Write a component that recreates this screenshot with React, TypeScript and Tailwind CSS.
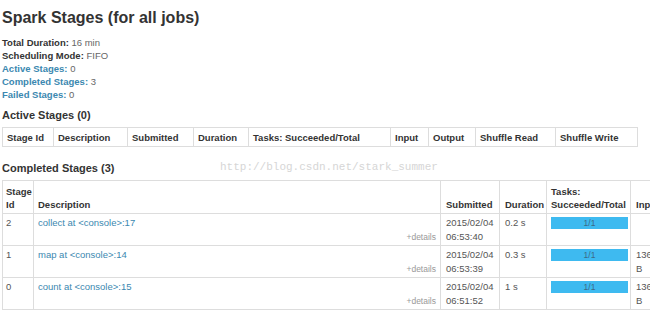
import React from 'react';

const activeCols = [
  { label: 'Stage Id', w: 'w-[51px]' },
  { label: 'Description', w: 'w-[74px]' },
  { label: 'Submitted', w: 'w-[66px]' },
  { label: 'Duration', w: 'w-[55px]' },
  { label: 'Tasks: Succeeded/Total', w: 'w-[142px]' },
  { label: 'Input', w: 'w-[38px]' },
  { label: 'Output', w: 'w-[47px]' },
  { label: 'Shuffle Read', w: 'w-[80px]' },
  { label: 'Shuffle Write', w: 'w-[82px]' },
];

const stages = [
  { id: '2', desc: 'collect at <console>:17', date: '2015/02/04', time: '06:53:40', dur: '0.2 s', input: '' },
  { id: '1', desc: 'map at <console>:14', date: '2015/02/04', time: '06:53:39', dur: '0.3 s', input: '136 B' },
  { id: '0', desc: 'count at <console>:15', date: '2015/02/04', time: '06:51:52', dur: '1 s', input: '136 B' },
];

export default function App() {
  return (
    <div className="relative w-[650px] h-[323px] overflow-hidden bg-white text-[#333] font-['Liberation_Sans',Arial,sans-serif]">
      <h3 className="pl-[2px] pt-[6px] text-[16px] leading-[24px] font-bold text-[#333]">
        Spark Stages (for all jobs)
      </h3>

      <ul className="mt-[6px] pl-[2px] text-[9.5px] leading-[13px]">
        <li>
          <strong>Total Duration:</strong> <span className="text-[#666]">16 min</span>
        </li>
        <li>
          <strong>Scheduling Mode:</strong> <span className="text-[#666]">FIFO</span>
        </li>
        <li>
          <strong className="text-[#3b88b0]">Active Stages:</strong> <span className="text-[#666]">0</span>
        </li>
        <li>
          <strong className="text-[#3b88b0]">Completed Stages:</strong> <span className="text-[#666]">3</span>
        </li>
        <li>
          <strong className="text-[#3b88b0]">Failed Stages:</strong> <span className="text-[#666]">0</span>
        </li>
      </ul>

      <h4 className="mt-[7px] pl-[2px] text-[11px] leading-[14px] font-bold">Active Stages (0)</h4>
      <table className="mt-[5px] ml-[2px] table-fixed border-collapse text-[9.5px]">
        <thead>
          <tr>
            {activeCols.map(c => (
              <th
                key={c.label}
                className={`${c.w} border border-[#ddd] px-[4px] py-0 h-[19px] leading-[17px] text-left font-bold whitespace-nowrap`}
              >
                {c.label}
              </th>
            ))}
          </tr>
        </thead>
      </table>

      <h4 className="mt-[14px] pl-[2px] text-[11px] leading-[14px] font-bold">Completed Stages (3)</h4>
      <table className="mt-[5px] ml-[2px] w-[900px] table-fixed border-collapse text-[9.5px]">
        <thead>
          <tr>
            <th className="w-[31px] border border-[#ddd] px-[3px] pt-[4px] pb-[2px] leading-[13px] text-left align-bottom font-bold">
              Stage Id
            </th>
            <th className="w-[407px] border border-[#ddd] px-[4px] pt-[4px] pb-[2px] leading-[13px] text-left align-bottom font-bold">
              Description
            </th>
            <th className="w-[59px] border border-[#ddd] px-[5px] pt-[4px] pb-[2px] leading-[13px] text-left align-bottom font-bold">
              Submitted
            </th>
            <th className="w-[47px] border border-[#ddd] px-[5px] pt-[4px] pb-[2px] leading-[13px] text-left align-bottom font-bold">
              Duration
            </th>
            <th className="w-[84px] border border-[#ddd] px-[4px] pt-[4px] pb-[2px] leading-[13px] text-left align-bottom font-bold">
              Tasks: Succeeded/Total
            </th>
            <th className="w-[30px] border border-[#ddd] px-[5px] pt-[4px] pb-[2px] leading-[13px] text-left align-bottom font-bold">
              Input
            </th>
            <th className="border border-[#ddd] px-[5px] pt-[4px] pb-[2px] leading-[13px] text-left align-bottom font-bold">
              Output
            </th>
          </tr>
        </thead>
        <tbody className="text-[#555]">
          {stages.map(s => (
            <tr key={s.id}>
              <td className="border border-[#ddd] px-[3px] pt-[2px] pb-[1px] leading-[14px] align-top">{s.id}</td>
              <td className="border border-[#ddd] px-[4px] pt-[2px] pb-[1px] leading-[14px] align-top">
                <div className="text-[#3b88b0]">{s.desc}</div>
                <div className="text-right text-[8.5px] text-[#999]">+details</div>
              </td>
              <td className="border border-[#ddd] px-[5px] pt-[2px] pb-[1px] leading-[14px] align-top">
                <div>{s.date}</div>
                <div>{s.time}</div>
              </td>
              <td className="border border-[#ddd] px-[5px] pt-[2px] pb-[1px] leading-[14px] align-top">{s.dur}</td>
              <td className="border border-[#ddd] px-[4px] pt-[3px] pb-[1px] align-top">
                <div className="h-[12px] w-[77px] bg-[#3ebaf0] text-center text-[8.5px] leading-[12px] text-[#3d6a86]">1/1</div>
              </td>
              <td className="border border-[#ddd] px-[5px] pt-[2px] pb-[1px] leading-[14px] align-top">{s.input}</td>
              <td className="border border-[#ddd] px-[5px] pt-[2px] pb-[1px] leading-[14px] align-top"></td>
            </tr>
          ))}
        </tbody>
      </table>

      <div className="absolute left-[220px] top-[160px] text-[11px] leading-[14px] text-[#d6d6d6] font-['Liberation_Mono','Courier_New',monospace]">
        http://blog.csdn.net/stark_summer
      </div>
    </div>
  );
}
